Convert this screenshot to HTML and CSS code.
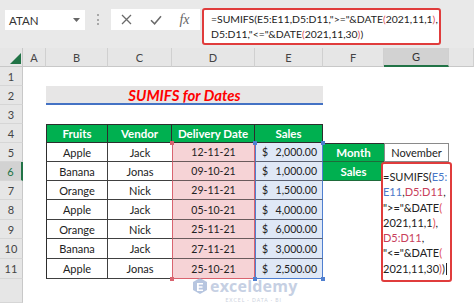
FILE: index.html
```html
<!DOCTYPE html>
<html>
<head>
<meta charset="utf-8">
<link rel="stylesheet" href="styles.css">
</head>
<body>
<div class="app">
  <div class="fbar">
    <div class="namebox"><span>ATAN</span><svg class="caret" width="7" height="4" viewBox="0 0 7 4"><path d="M0 0h7L3.5 4z" fill="#666"/></svg></div>
    <div class="grip"></div>
    <div class="btns">
      <span class="slot"><svg width="11" height="11" viewBox="0 0 11 11"><path d="M1 1l9 9M10 1l-9 9" stroke="#6a6a6a" stroke-width="1.3" fill="none"/></svg></span>
      <span class="slot"><svg width="12" height="10" viewBox="0 0 12 10"><path d="M1 5.2l3.6 3.6L11 1.2" stroke="#6a6a6a" stroke-width="1.5" fill="none"/></svg></span>
      <span class="slot fx">fx</span>
    </div>
    <div class="formula">=SUMIFS(E5:E11,D5:D11,"&gt;="&amp;DATE<span class="pk">(</span>2021,11,1<span class="pk">)</span>,<br>D5:D11,"&lt;="&amp;DATE<span class="pk">(</span>2021,11,30<span class="pk">)</span>)</div>
  </div>
  <div class="sheet">
    <div class="corner"><span class="tri"></span></div>
    <div class="ch">A</div><div class="ch">B</div><div class="ch">C</div><div class="ch">D</div><div class="ch">E</div><div class="ch">F</div><div class="ch sel">G</div><div class="ch"></div>

    <div class="rh">1</div><div></div><div></div><div></div><div></div><div></div><div></div><div></div><div></div>

    <div class="rh">2</div><div></div><div class="title">SUMIFS for Dates</div><div></div><div></div><div></div>

    <div class="rh">3</div><div></div><div></div><div></div><div></div><div></div><div></div><div></div><div></div>

    <div class="rh">4</div><div></div>
    <div class="th first">Fruits</div><div class="th">Vendor</div><div class="th">Delivery Date</div><div class="th">Sales</div>
    <div></div><div></div><div></div>

    <div class="rh">5</div><div></div>
    <div class="td first">Apple</div><div class="td nr">Jack</div><div class="dt top">12-11-21</div><div class="amt top"><span>$</span><span>2,000.00</span></div>
    <div class="lab first-lab">Month</div><div class="nov">November</div><div></div>

    <div class="rh act">6</div><div></div>
    <div class="td first">Banana</div><div class="td nr">Jonas</div><div class="dt">09-10-21</div><div class="amt"><span>$</span><span>1,000.00</span></div>
    <div class="lab">Sales</div>
    <div class="edit">=SUMIFS(<span class="bl">E5:</span><br><span class="bl">E11</span>,<span class="rd">D5:D11</span>,<br>"&gt;="&amp;DATE<span class="pk">(</span><br>2021,11,1<span class="pk">)</span>,<br><span class="rd">D5:D11</span>,<br>"&lt;="&amp;DATE<span class="pk">(</span><br>2021,11,30<span class="pk">)</span>)<span class="cur"></span></div>
    <div></div>

    <div class="rh">7</div><div></div>
    <div class="td first">Orange</div><div class="td nr">Nick</div><div class="dt">29-11-21</div><div class="amt"><span>$</span><span>1,500.00</span></div>
    <div></div><div></div>

    <div class="rh">8</div><div></div>
    <div class="td first">Apple</div><div class="td nr">Jack</div><div class="dt">05-10-21</div><div class="amt"><span>$</span><span>4,000.00</span></div>
    <div></div><div></div>

    <div class="rh">9</div><div></div>
    <div class="td first">Orange</div><div class="td nr">Nick</div><div class="dt">25-11-21</div><div class="amt"><span>$</span><span>6,000.00</span></div>
    <div></div><div></div>

    <div class="rh">10</div><div></div>
    <div class="td first">Banana</div><div class="td nr">Jack</div><div class="dt">27-11-21</div><div class="amt"><span>$</span><span>3,000.00</span></div>
    <div></div><div></div>

    <div class="rh">11</div><div></div>
    <div class="td first">Apple</div><div class="td nr">Jonas</div><div class="dt bot">25-10-21</div><div class="amt bot"><span>$</span><span>2,500.00</span></div>
    <div></div><div></div>

    <div class="rh"></div><div></div><div></div><div></div><div></div><div></div><div></div><div></div><div></div>

    <div class="wm">
      <svg width="14" height="16" viewBox="0 0 14 16"><path d="M7 0L14 4v8l-7 4-7-4V4z" fill="#9fb3d6"/><path d="M4 5h6v1.6H5.8v1.6H9.5v1.6H5.8v1.6H10V13H4z" fill="#fff"/></svg>
      <div class="wmt"><span class="wmb">exceldemy</span><span class="wms">EXCEL · DATA · BI</span></div>
    </div>
  </div>
</div>
</body>
</html>
```

FILE: styles.css
```css
* { box-sizing: border-box; margin: 0; padding: 0; }
html, body { width: 474px; height: 303px; overflow: hidden; }
body { font-family: Lato, "Liberation Sans", sans-serif; color: #222; background: #fff; }

.app { display: flex; flex-direction: column; height: 303px; }

/* formula bar */
.fbar { flex: none; height: 48px; background: #e9e9e9; display: flex; align-items: flex-start; padding-left: 5px; }
.namebox { margin-top: 10px; width: 80px; height: 20px; background: #fff; display: flex; align-items: center; justify-content: space-between; padding: 0 5px 0 4px; font-size: 11.5px; color: #333; }
.grip { margin: 14px 0 0 12px; height: 11px; border-left: 2px dotted #a8a8a8; }
.btns { margin: 9px 0 0 12px; width: 89px; height: 21px; background: #fff; display: flex; align-items: center; padding-left: 1px; }
.slot { width: 29px; display: flex; justify-content: center; align-items: center; }
.fx { font-family: "Liberation Serif", serif; font-style: italic; font-size: 14px; color: #666; }
.formula { margin: 8px 0 0 2px; width: 239px; height: 37px; border: 2px solid #e03c3c; border-radius: 3px; background: #fff; padding: 2px 0 0 7px; font-size: 10.4px; line-height: 15px; color: #222; white-space: nowrap; overflow: hidden; }
.pk { color: #e0505a; }

/* sheet grid */
.sheet { flex: 1; position: relative; display: grid; grid-template-columns: 23px 23px 62px 64px 83px 68px 61px 65px 1fr; grid-template-rows: 19px repeat(7, 19px) 20px 19px 20px 20px 1fr; font-size: 11px; }
.corner { background: #e6e6e6; border-right: 1px solid #c8c8c8; border-bottom: 1px solid #c8c8c8; display: flex; justify-content: flex-end; align-items: flex-end; padding: 0 1px 2px 0; }
.tri { width: 0; height: 0; border-left: 11px solid transparent; border-bottom: 11px solid #217346; }
.ch { background: #e6e6e6; border-right: 1px solid #d0d0d0; border-bottom: 1px solid #c8c8c8; display: flex; align-items: center; justify-content: center; color: #444; font-size: 11px; }
.ch.sel { background: #d2d2d2; border-bottom: 2px solid #217346; color: #333; }
.rh { background: #e6e6e6; border-right: 1px solid #c8c8c8; border-bottom: 1px solid #d6d6d6; display: flex; align-items: center; justify-content: center; color: #444; font-size: 11px; }
.rh.act { background: #d2d2d2; border-right: 2px solid #217346; color: #217346; }

.title { grid-column: span 4; background: #e7e6e6; border-bottom: 2px solid #4472c4; display: flex; align-items: center; justify-content: center; color: #ff0000; font-weight: bold; font-style: italic; font-size: 15px; }

.th { background: #00b050; color: #fff; font-weight: bold; font-size: 11.5px; border-top: 1px solid #2d2d2d; border-right: 1px solid #2d2d2d; border-bottom: 1px solid #2d2d2d; display: flex; align-items: center; justify-content: center; }
.first { border-left: 1px solid #2d2d2d; }
.td { border-right: 1px solid #404040; border-bottom: 1px solid #404040; display: flex; align-items: center; justify-content: center; }
.td.nr { border-right: none; }
.dt { position: relative; background: #f6d3d6; border-left: 1px solid #d9636f; border-right: 1px solid #d9636f; border-bottom: 1px solid #6a5a5c; display: flex; align-items: center; justify-content: center; font-size: 10.5px; }
.dt.bot { border-bottom: 1px solid #d9636f; }
.amt { position: relative; background: #dfe8f6; border-left: 1px solid #4f7fd0; border-right: 1px solid #4f7fd0; border-bottom: 1px solid #5a6070; display: flex; align-items: center; justify-content: space-between; padding: 0 5px 0 6px; font-size: 10.5px; }
.amt.bot { border-bottom: 1px solid #4f7fd0; }

/* range handles */
.dt.top::before, .dt.top::after, .dt.bot::before, .dt.bot::after,
.amt.top::before, .amt.top::after, .amt.bot::before, .amt.bot::after { content: ""; position: absolute; width: 4px; height: 4px; z-index: 1; }
.dt.top::before, .dt.top::after, .dt.bot::before, .dt.bot::after { background: #d9636f; }
.amt.top::before, .amt.top::after, .amt.bot::before, .amt.bot::after { background: #4f7fd0; }
.top::before { left: -3px; top: -2px; }
.top::after { right: -3px; top: -2px; }
.bot::before { left: -3px; bottom: -3px; }
.bot::after { right: -3px; bottom: -3px; }

.lab { background: #00b050; color: #fff; font-weight: bold; font-size: 11.5px; border-bottom: 1px solid #1e6b3a; display: flex; align-items: center; justify-content: center; }
.lab.first-lab { border-top: 1px solid #2d2d2d; }
.nov { border: 1px solid #8a8a8a; display: flex; align-items: center; justify-content: center; }

.edit { grid-row: span 6; margin: 0 -3px -3px -3px; position: relative; z-index: 2; background: #fff; border: 2px solid #e03c3c; border-radius: 3px; padding: 5px 0 0 0; font-size: 11px; line-height: 15.3px; color: #222; white-space: nowrap; overflow: hidden; }
.bl { color: #4a78c8; }
.rd { color: #c8405a; }
.cur { display: inline-block; width: 1px; height: 12px; background: #222; vertical-align: -2px; margin-left: 1px; }

/* watermark */
.wm { position: absolute; left: 193px; top: 230px; display: flex; align-items: flex-start; gap: 3px; opacity: 0.75; z-index: 3; }
.wmt { display: flex; flex-direction: column; align-items: center; }
.wmb { font-family: "Open Sans", sans-serif; font-weight: bold; font-size: 16px; line-height: 16px; color: #b3c1da; letter-spacing: 0.2px; }
.wms { font-size: 5px; line-height: 6px; margin-top: 3px; color: #b9c3d2; letter-spacing: 1px; }
```
